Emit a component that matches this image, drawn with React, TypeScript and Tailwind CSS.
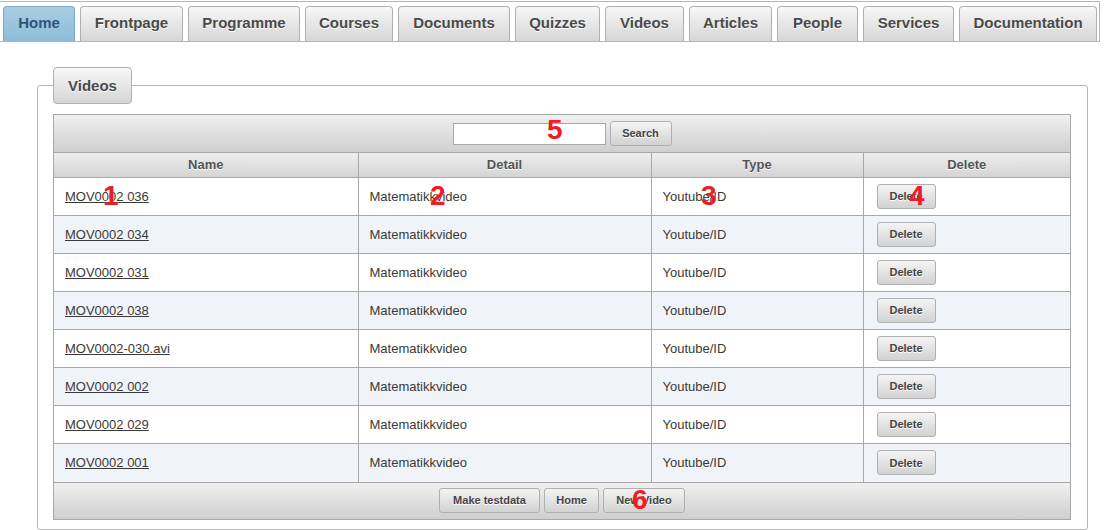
import React from "react";

const tabs = [
  { label: "Home", w: "w-[72px]", active: true },
  { label: "Frontpage", w: "w-[103px]" },
  { label: "Programme", w: "w-[112px]" },
  { label: "Courses", w: "w-[88px]" },
  { label: "Documents", w: "w-[112px]" },
  { label: "Quizzes", w: "w-[85px]" },
  { label: "Videos", w: "w-[79px]" },
  { label: "Articles", w: "w-[83px]" },
  { label: "People", w: "w-[81px]" },
  { label: "Services", w: "w-[91px]" },
  { label: "Documentation", w: "w-[138px]" },
];

const videos = [
  "MOV0002 036",
  "MOV0002 034",
  "MOV0002 031",
  "MOV0002 038",
  "MOV0002-030.avi",
  "MOV0002 002",
  "MOV0002 029",
  "MOV0002 001",
];

const btn =
  "h-[25px] rounded-[3px] border border-[#b0b0b0] bg-gradient-to-b from-[#f4f4f4] to-[#d2d2d2] text-[11px] font-bold text-[#444] [text-shadow:0_1px_0_#fff]";

function Mark({ n, className }: { n: string; className: string }) {
  return (
    <span
      className={
        "pointer-events-none absolute text-[28px] leading-none font-bold text-[#ee1c25] " +
        className
      }
    >
      {n}
    </span>
  );
}

export default function App() {
  return (
    <div className="relative h-[530px] w-[1107px] overflow-hidden bg-white font-['Liberation_Sans',Arial,sans-serif] text-[#3a3a3a]">
      {/* tab bar */}
      <div className="mt-px flex h-[41px] w-[1100px] items-end gap-[5px] border-y border-r border-[#b5b5b5] pl-[3px]">
        {tabs.map((t) => (
          <div
            key={t.label}
            className={
              "flex h-[35px] items-center justify-center rounded-t-[4px] border border-b-0 pb-px text-[15px] font-bold " +
              t.w +
              (t.active
                ? " border-[#7ea9c6] bg-gradient-to-b from-[#a9cde3] to-[#8dbcd8] text-[#2c5675]"
                : " border-[#b0b0b0] bg-gradient-to-b from-[#f7f7f7] to-[#d6d6d6] text-[#4a4a4a] [text-shadow:0_1px_0_#fff]")
            }
          >
            {t.label}
          </div>
        ))}
      </div>

      <fieldset className="mt-[25px] ml-[37px] w-[1051px] rounded-[3px] border border-[#b5b5b5] px-[15px] pt-[10px] pb-[9px]">
        <legend className="flex h-[37px] w-[79px] items-center justify-center rounded-[4px] border border-[#b0b0b0] bg-gradient-to-b from-[#f7f7f7] to-[#d6d6d6] pt-px text-[15px] font-bold text-[#4a4a4a] [text-shadow:0_1px_0_#fff]">
          Videos
        </legend>

        <div className="w-[1018px] border border-[#a8a8a8]">
          {/* search toolbar */}
          <div className="flex h-[37px] items-center justify-center gap-[4px] bg-gradient-to-b from-[#f0f0f0] to-[#cfcfcf]">
            <input className="h-[22px] w-[153px] border border-[#a8a8a8] bg-white" />
            <button className={btn + " w-[62px]"}>Search</button>
          </div>

          <table className="w-full table-fixed border-collapse text-[13px]">
            <colgroup>
              <col className="w-[304px]" />
              <col className="w-[293px]" />
              <col className="w-[212px]" />
              <col />
            </colgroup>
            <thead>
              <tr className="h-[25px] bg-gradient-to-b from-[#eeeeee] to-[#d3d3d3] text-[13px] font-bold text-[#555]">
                {["Name", "Detail", "Type", "Delete"].map((h, i) => (
                  <th
                    key={h}
                    className={
                      "border-t border-[#a8a8a8] font-bold [text-shadow:0_1px_0_#fff] " +
                      (i > 0 ? "border-l" : "")
                    }
                  >
                    {h}
                  </th>
                ))}
              </tr>
            </thead>
            <tbody>
              {videos.map((v, i) => (
                <tr
                  key={v}
                  className={"h-[38px] " + (i % 2 === 1 ? "bg-[#f0f4f9]" : "bg-white")}
                >
                  <td className="border-t border-[#a8a8a8] pl-[11px]">
                    <a href="#" className="text-[#3a3a3a] underline">
                      {v}
                    </a>
                  </td>
                  <td className="border-t border-l border-[#a8a8a8] pl-[11px]">
                    Matematikkvideo
                  </td>
                  <td className="border-t border-l border-[#a8a8a8] pl-[11px]">
                    Youtube/ID
                  </td>
                  <td className="border-t border-l border-[#a8a8a8] pl-[13px]">
                    <button className={btn + " w-[59px]"}>Delete</button>
                  </td>
                </tr>
              ))}
            </tbody>
          </table>

          {/* footer toolbar */}
          <div className="flex h-[37px] items-center justify-center gap-[4px] border-t border-[#a8a8a8] bg-gradient-to-b from-[#f0f0f0] to-[#cfcfcf]">
            <button className={btn + " w-[101px]"}>Make testdata</button>
            <button className={btn + " w-[55px]"}>Home</button>
            <button className={btn + " w-[82px]"}>New Video</button>
          </div>
        </div>
      </fieldset>

      {/* annotation numbers */}
      <Mark n="1" className="left-[103px] top-[182px]" />
      <Mark n="2" className="left-[430px] top-[182px]" />
      <Mark n="3" className="left-[701px] top-[182px]" />
      <Mark n="4" className="left-[909px] top-[182px]" />
      <Mark n="5" className="left-[547px] top-[116px]" />
      <Mark n="6" className="left-[632px] top-[486px]" />
    </div>
  );
}
